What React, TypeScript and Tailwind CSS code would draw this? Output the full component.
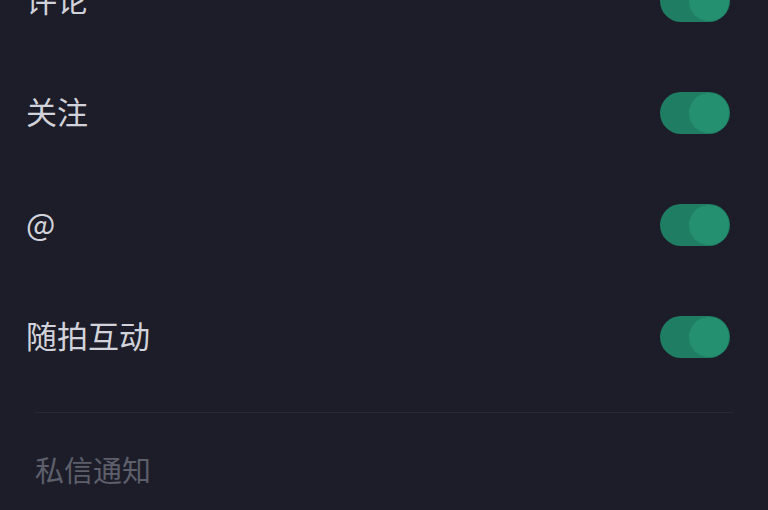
import React, { useState } from "react";

const font = { fontFamily: '"Noto Sans CJK SC", "Noto Sans", sans-serif' };

const Toggle: React.FC<{ on: boolean; onClick: () => void }> = ({ on, onClick }) => (
  <button
    onClick={onClick}
    className={`relative h-[42px] w-[70px] rounded-full ${on ? "bg-[#1e7d62]" : "bg-[#3a3c48]"}`}
  >
    <span
      className={`absolute top-[1px] h-[40px] w-[40px] rounded-full ${
        on ? "right-[1px] bg-[#25906f]" : "left-[1px] bg-[#8a8c96]"
      }`}
    />
  </button>
);

export default function App() {
  const [items, setItems] = useState([
    { label: "评论", on: true },
    { label: "关注", on: true },
    { label: "@", on: true },
    { label: "随拍互动", on: true },
  ]);

  return (
    <div className="h-[510px] w-[768px] overflow-hidden bg-[#1c1d29]" style={font}>
      <div className="-mt-[55px]">
        {items.map((item, i) => (
          <div key={item.label} className="flex h-[112px] items-center justify-between pl-[26px] pr-[38px]">
            <span className="pb-[6px] text-[31px] leading-none text-[#d2d3da]">{item.label}</span>
            <Toggle
              on={item.on}
              onClick={() =>
                setItems((prev) => prev.map((p, j) => (j === i ? { ...p, on: !p.on } : p)))
              }
            />
          </div>
        ))}
        <div className="mx-[35px] mt-[19px] border-t border-[#272936]" />
        <div className="px-[35px] pt-[42px] text-[29px] leading-none text-[#5d5f6a]">私信通知</div>
      </div>
    </div>
  );
}
